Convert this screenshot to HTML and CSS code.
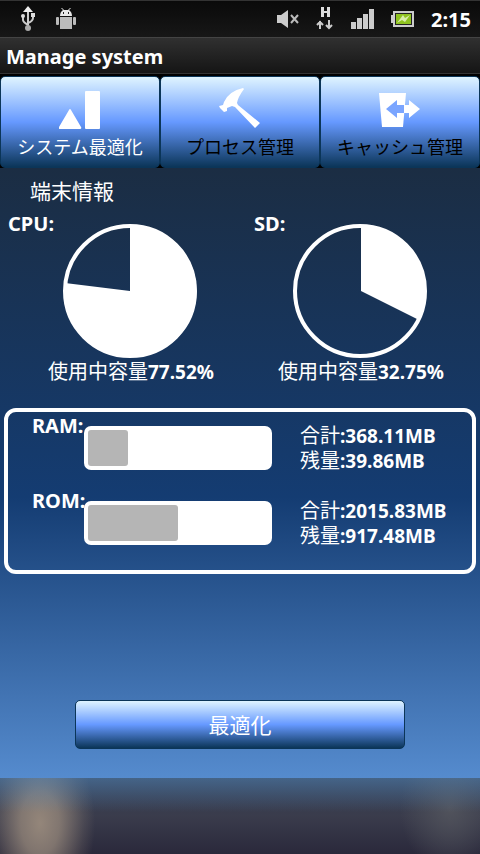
FILE: index.html
```html
<!DOCTYPE html>
<html lang="ja">
<head>
    <meta charset="UTF-8">
    <meta name="viewport" content="width=device-width, initial-scale=1.0">
    <title>Manage system</title>
    <link rel="stylesheet" href="styles.css">
</head>
<body>
    <div class="status-bar">
        <div class="status-left">
            <!-- USB -->
            <svg width="16" height="26" viewBox="0 0 16 26">
                <g fill="none" stroke="#ccc" stroke-width="2">
                    <path d="M8 5v17M3 10v4q0 2 5 5M13 9v3q0 3-5 5"/>
                </g>
                <path fill="#eee" d="M8 0l5 6H3z"/>
                <circle cx="3" cy="10" r="2" fill="#ddd"/>
                <path fill="#ddd" d="M11 7h4v4h-4z"/>
                <circle cx="8" cy="22" r="3" fill="#aaa"/>
            </svg>
            <!-- Android -->
            <svg width="20" height="22" viewBox="0 0 20 22">
                <path fill="#e8e8e8" d="M4 8q0-4 3-6L5 0h1l2 2h4l2-2h1l-2 2q3 2 3 6z"/>
                <path fill="#bbb" d="M4 9h12v12H4z"/>
                <rect x="0" y="9" width="3" height="8" rx="1" fill="#bbb"/>
                <rect x="17" y="9" width="3" height="8" rx="1" fill="#bbb"/>
                <path fill="#222" d="M7 4h1v2H7zM12 4h1v2h-1z"/>
            </svg>
        </div>
        <div class="status-right">
            <!-- muted speaker -->
            <svg width="22" height="18" viewBox="0 0 22 18">
                <path fill="#ccc" d="M0 5h4l7-5v18l-7-5H0z"/>
                <path fill="none" stroke="#bbb" stroke-width="2" d="M14 5l7 8M21 5l-7 8"/>
            </svg>
            <!-- HSDPA -->
            <svg width="18" height="24" viewBox="0 0 18 24">
                <path fill="#ddd" d="M5 0h3v4h3V0h3v10h-3V6H8v4H5z"/>
                <path fill="none" stroke="#ccc" stroke-width="2" d="M4 22v-8M1 18l3-3 3 3M13 13v8M10 18l3 3 3-3"/>
            </svg>
            <!-- signal -->
            <svg width="23" height="20" viewBox="0 0 23 20">
                <path fill="#ccc" d="M0 13h5v7H0zM6 9h5v11H6zM12 5h5v15h-5zM18 0h5v20h-5z"/>
            </svg>
            <!-- battery -->
            <svg width="23" height="16" viewBox="0 0 23 16">
                <path fill="#ccc" d="M2 0h21v16H2v-4H0V4h2z"/>
                <path fill="#222" d="M4 2h17v12H4z"/>
                <path fill="#8ec21f" d="M5 3h15v10H5z"/>
                <path fill="#d8edaa" d="M6 12l6-8 2 3 5-3-5 7-3-2z"/>
            </svg>
            <span class="clock">2:15</span>
        </div>
    </div>
    <h1 class="title">Manage system</h1>

    <nav class="tabs">
        <button class="tab active">
            <svg width="42" height="38" viewBox="0 0 42 38" fill="#fff">
                <path d="M10 19q1-2 2 0l10 17q1 2-1 2H1q-2 0-1-2z"/>
                <rect x="26" y="0" width="15" height="38" rx="1"/>
            </svg>
            システム最適化
        </button>
        <button class="tab">
            <svg width="42" height="42" viewBox="0 0 42 42" fill="#fff">
                <path d="M24 1Q10 4 5 15l-1 3-4 1 1 2 4 4 3-1v-3l5-2 3 1 20 21 5-5-22-18-1-2q1-6 7-14z"/>
            </svg>
            プロセス管理
        </button>
        <button class="tab">
            <svg width="42" height="36" viewBox="0 0 42 36">
                <path fill="#fff" d="M0 0h27l-3 34H3z"/>
                <path fill="#7aa5ff" d="M7 16L18 7v5h8v8h-8v5z"/>
                <path fill="#fff" d="M25 12h5V7l11 9-11 9v-5h-5z"/>
            </svg>
            キャッシュ管理
        </button>
    </nav>

    <main class="content">
        <h2 class="section-title">端末情報</h2>
        <div class="charts">
            <section class="chart">
                <h3 class="label">CPU:</h3>
                <svg class="pie" viewBox="0 0 136 136">
                    <circle cx="68" cy="68" r="65" fill="none" stroke="#fff" stroke-width="4"/>
                    <path fill="#fff" d="M68 68V2A66 66 0 1 1 3 60z"/>
                </svg>
                <p class="usage">使用中容量<b>77.52%</b></p>
            </section>
            <section class="chart">
                <h3 class="label">SD:</h3>
                <svg class="pie" viewBox="0 0 136 136">
                    <circle cx="68" cy="68" r="65" fill="none" stroke="#fff" stroke-width="4"/>
                    <path fill="#fff" d="M69 68V2A66 66 0 0 1 127 97z"/>
                </svg>
                <p class="usage">使用中容量<b>32.75%</b></p>
            </section>
        </div>

        <section class="memory">
            <div class="memory-row">
                <h3 class="label">RAM:</h3>
                <div class="bar"><div class="bar-fill" style="width: 22%"></div></div>
                <p class="amount">合計<b>:368.11MB</b><br>残量<b>:39.86MB</b></p>
            </div>
            <div class="memory-row">
                <h3 class="label">ROM:</h3>
                <div class="bar"><div class="bar-fill" style="width: 50%"></div></div>
                <p class="amount">合計<b>:2015.83MB</b><br>残量<b>:917.48MB</b></p>
            </div>
        </section>

        <button class="optimize">最適化</button>
    </main>
    <div class="ad"></div>
</body>
</html>
```
FILE: styles.css
```css
* {
    margin: 0;
    padding: 0;
    box-sizing: border-box;
}

body {
    display: flex;
    flex-direction: column;
    min-height: 100vh;
    background-color: #000;
    color: #fff;
    font-family: "Noto Sans", "Noto Sans CJK JP", sans-serif;
    font-size: 20px;
    line-height: 25px;
}

button {
    border: 1px solid #0b3558;
    border-radius: 5px;
    background: linear-gradient(#dff4ff, #6699ff 50%, #0b3558);
    color: #fff;
    font-family: inherit;
}

svg {
    display: block;
    flex: none;
}

.status-bar {
    display: flex;
    justify-content: space-between;
    align-items: center;
    height: 37px;
    padding: 0 9px 0 20px;
    border-top: 1px solid #333;
    background: linear-gradient(#0a0a0a, #171717);
}

.status-left,
.status-right {
    display: flex;
    align-items: center;
}

.status-left {
    gap: 20px;
}

.status-right {
    gap: 17px;
}

.clock {
    font-weight: bold;
}

.title {
    height: 37px;
    padding: 0 6px;
    border-top: 1px solid #444;
    border-bottom: 1px solid #333;
    background: linear-gradient(#303030, #151515);
    font-size: 20px;
    line-height: 37px;
}

.tabs {
    display: flex;
    padding-top: 2px;
}

.tab {
    display: flex;
    flex: 1;
    flex-direction: column;
    align-items: center;
    justify-content: flex-end;
    height: 92px;
    padding-bottom: 7px;
    color: #000;
    font-size: 18px;
    line-height: 25px;
}

.tab svg {
    margin-bottom: 6px;
}

.tab.active {
    color: #fff;
}

.content {
    display: flex;
    flex: 1;
    flex-direction: column;
    background: linear-gradient(#1b2d43, #143c72 54%, #558bce);
}

.section-title {
    padding: 11px 30px 7px;
    font-size: 21px;
    font-weight: normal;
}

.label {
    font-size: 20px;
    line-height: 25px;
}

b {
    font-size: 19px;
    line-height: 1;
}

.charts {
    display: flex;
    padding: 0 12px 0 8px;
}

.chart {
    display: flex;
    flex: 1;
    flex-direction: column;
}

.chart .label {
    height: 12px;
}

.chart + .chart .label {
    padding-left: 16px;
}

.pie {
    width: 136px;
    margin-left: 54px;
}

.usage {
    padding-left: 40px;
}

.memory {
    display: flex;
    flex-direction: column;
    gap: 25px;
    margin: 24px 4px 0;
    padding: 11px 0 22px 24px;
    border: 4px solid #fff;
    border-radius: 12px;
}

.memory-row {
    display: flex;
    align-items: center;
}

.memory-row .label {
    align-self: flex-start;
    width: 52px;
    line-height: 5px;
}

.bar {
    width: 188px;
    height: 44px;
    padding: 4px;
    border-radius: 7px;
    background-color: #fff;
}

.bar-fill {
    height: 100%;
    border-radius: 3px;
    background-color: #b5b5b5;
}

.amount {
    margin-left: 28px;
}

.optimize {
    width: 330px;
    height: 49px;
    margin: auto auto 29px;
    padding-bottom: 2px;
    font-size: 21px;
}

/* blurred banner */
.ad {
    height: 76px;
    background:
        linear-gradient(rgba(85, 139, 190, 0.5), transparent 45%),
        radial-gradient(ellipse 55px 90px at 40px 45px, #94867a, rgba(148, 134, 122, 0.8) 35%, rgba(148, 134, 122, 0.2) 80%, transparent),
        radial-gradient(ellipse 50px 65px at 450px 30px, #51535c, rgba(81, 83, 92, 0.3) 70%, transparent),
        linear-gradient(#343d52, #3a3c4c 50%, #2a293b);
}
```
